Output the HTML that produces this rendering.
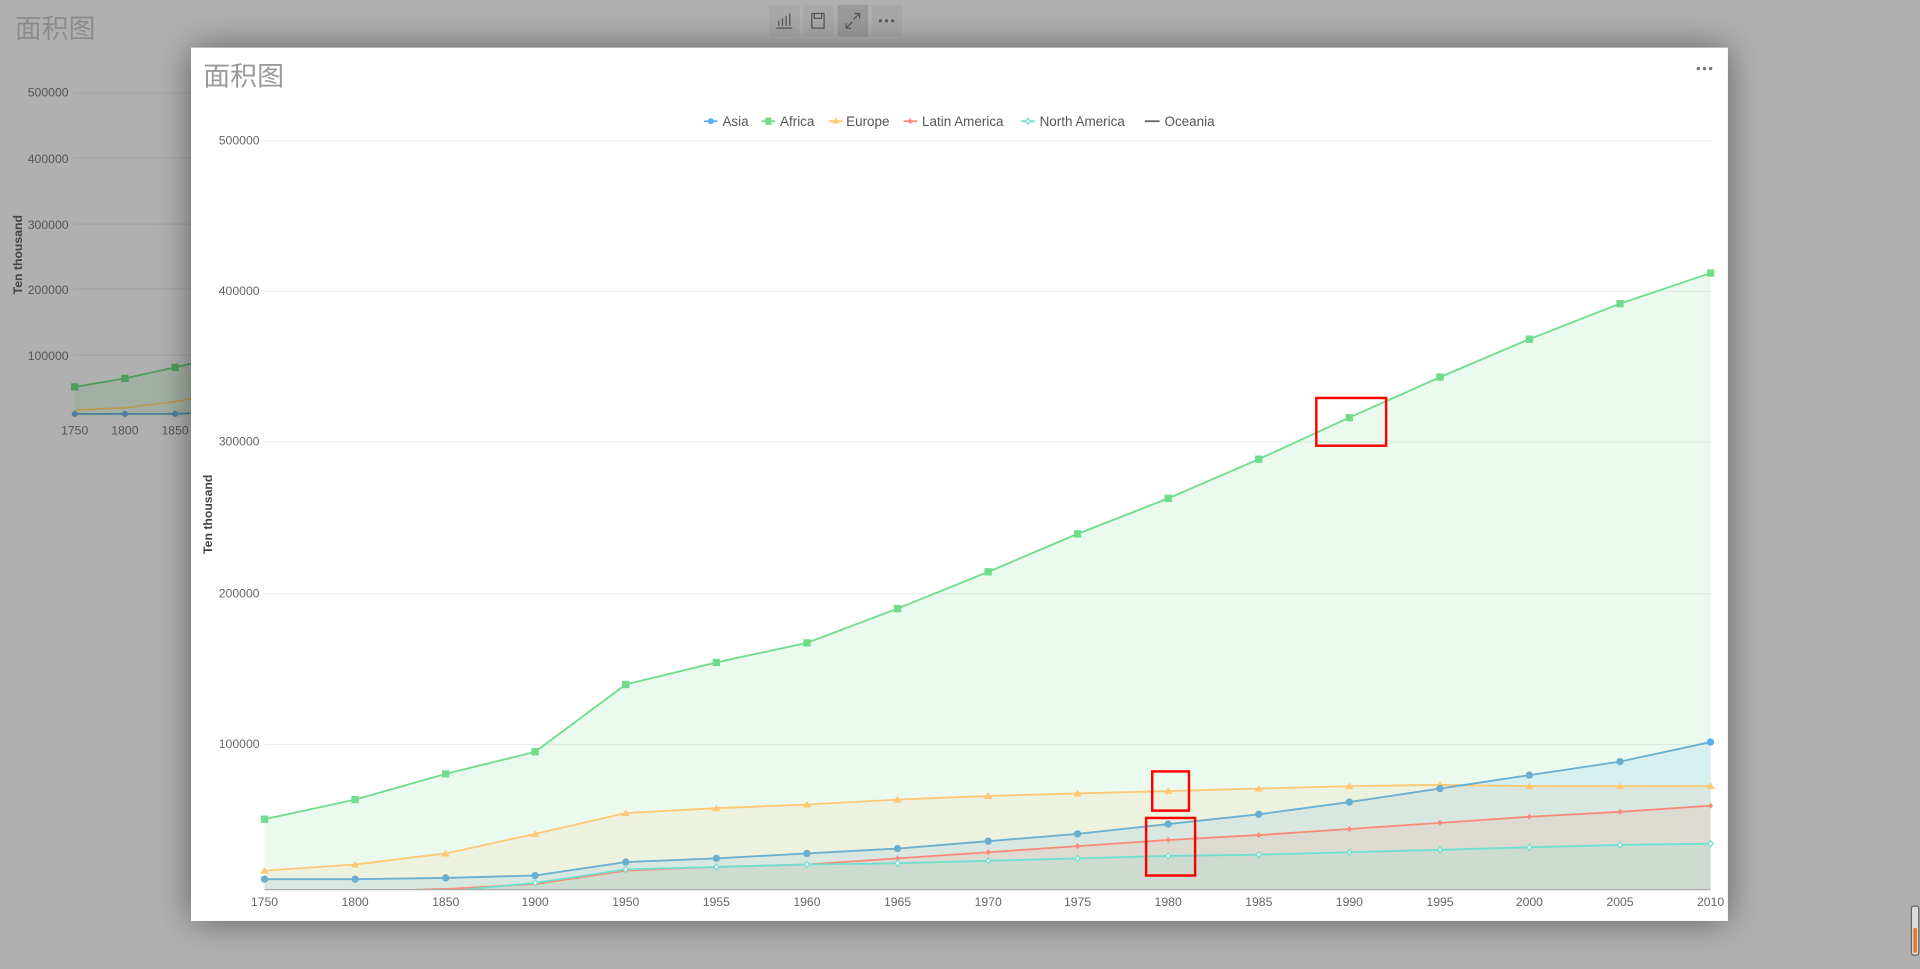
<!DOCTYPE html>
<html><head><meta charset="utf-8"><style>
html,body{margin:0;padding:0;width:1920px;height:969px;overflow:hidden;background:#b0b0b0}
svg{display:block}
text{font-family:"Liberation Sans","Noto Sans CJK SC",sans-serif}
</style></head><body>
<svg width="1920" height="969" viewBox="0 0 1568 791.35" xmlns="http://www.w3.org/2000/svg">
<defs>
<filter id="sh" x="-10%" y="-10%" width="120%" height="120%"><feDropShadow dx="0" dy="0" stdDeviation="14" flood-color="#000" flood-opacity="0.45"/></filter>
<clipPath id="pc"><rect x="216" y="100" width="1185" height="626"/></clipPath>
</defs>
<rect width="1568" height="792" fill="#b0b0b0"/>
<text x="12" y="31" font-size="22" fill="#8c8c8c">面积图</text>
<g font-size="10" fill="#555" text-anchor="end">
<text x="56" y="79">500000</text><text x="56" y="133">400000</text><text x="56" y="187">300000</text><text x="56" y="240">200000</text><text x="56" y="294">100000</text>
</g>
<g stroke="#a4a4a4" stroke-width="1"><line x1="60" y1="76" x2="170" y2="76"/><line x1="60" y1="129" x2="170" y2="129"/><line x1="60" y1="183" x2="170" y2="183"/><line x1="60" y1="236" x2="170" y2="236"/><line x1="60" y1="290" x2="170" y2="290"/></g>
<text transform="translate(18,208) rotate(-90)" font-size="10" font-weight="bold" fill="#444" text-anchor="middle">Ten thousand</text>
<g font-size="10" fill="#555" text-anchor="middle"><text x="61" y="355">1750</text><text x="102" y="355">1800</text><text x="143" y="355">1850</text></g>
<polygon points="61,316 102,309 143,300 165,295 165,340 61,340" fill="#8fae8f" opacity="0.4"/>
<polyline points="61,316 102,309 143,300 165,295" fill="none" stroke="#4e9e5e" stroke-width="1.5"/>
<polyline points="61,335 102,333 143,328 165,324" fill="none" stroke="#b99a52" stroke-width="1.5"/>
<polyline points="61,338 102,338 143,338 165,337" fill="none" stroke="#4d7d9b" stroke-width="1.5"/>
<g fill="#4e9e5e"><rect x="58" y="313" width="6" height="6"/><rect x="99" y="306" width="6" height="6"/><rect x="140" y="297" width="6" height="6"/></g>
<g fill="#4d7d9b"><circle cx="61" cy="338" r="2.5"/><circle cx="102" cy="338" r="2.5"/><circle cx="143" cy="338" r="2.5"/></g>
<g>
<rect x="628" y="4" width="25" height="26" fill="#a8a8a8"/><rect x="656" y="4" width="25" height="26" fill="#a8a8a8"/><rect x="684" y="4" width="25" height="26" fill="#9a9a9a"/><rect x="712" y="4" width="25" height="26" fill="#a8a8a8"/>
<g stroke="#555" stroke-width="1" fill="none">
<path d="M634 23h13M636 21v-4M639 21v-6M642 21v-8M645 21v-10"/>
<path d="M663 11h10v12h-10zM665 11v4h6v-4"/>
<path d="M691 23l5-5M691 23v-4M691 23h4M702 11l-5 5M702 11v4M702 11h-4"/>
</g>
<g fill="#555"><circle cx="719" cy="17" r="1.3"/><circle cx="724" cy="17" r="1.3"/><circle cx="729" cy="17" r="1.3"/></g>
</g>
<rect x="156" y="39" width="1255" height="713" fill="#fff" filter="url(#sh)"/>
<rect x="156" y="39" width="1255" height="713" fill="#fff"/>
<text x="166" y="70" font-size="22" fill="#9a9a9a">面积图</text>
<g fill="#777"><circle cx="1387" cy="56" r="1.4"/><circle cx="1392" cy="56" r="1.4"/><circle cx="1397" cy="56" r="1.4"/></g>
<g font-size="11" fill="#555">
<line x1="575" y1="99" x2="586" y2="99" stroke="#5ab1ef" stroke-width="1.5"/><circle cx="580.5" cy="99" r="2.5" fill="#5ab1ef"/><text x="590" y="103">Asia</text>
<line x1="622" y1="99" x2="633" y2="99" stroke="#6fdd8b" stroke-width="1.5"/><rect x="625" y="96" width="5" height="6" fill="#6fdd8b"/><text x="637" y="103">Africa</text>
<line x1="677" y1="99" x2="688" y2="99" stroke="#ffc875" stroke-width="1.5"/><path d="M682.5 96l3 5h-6z" fill="#ffc875"/><text x="691" y="103">Europe</text>
<line x1="738" y1="99" x2="749" y2="99" stroke="#f88a79" stroke-width="1.5"/><path d="M743.5 96.5l2 2.5-2 2.5-2-2.5z" fill="#f88a79"/><text x="753" y="103">Latin America</text>
<line x1="834" y1="99" x2="845" y2="99" stroke="#6ee0d0" stroke-width="1.5"/><path d="M839.5 96.5l2 2.5-2 2.5-2-2.5z" fill="#fff" stroke="#6ee0d0"/><text x="849" y="103">North America</text>
<line x1="935" y1="99" x2="947" y2="99" stroke="#666" stroke-width="1.5"/><text x="951" y="103">Oceania</text>
</g>
<g stroke="#eee" stroke-width="1"><line x1="216" y1="115" x2="1397" y2="115"/><line x1="216" y1="238" x2="1397" y2="238"/><line x1="216" y1="361" x2="1397" y2="361"/><line x1="216" y1="485" x2="1397" y2="485"/><line x1="216" y1="608" x2="1397" y2="608"/></g>
<g font-size="10" fill="#666" text-anchor="end">
<text x="212" y="118">500000</text><text x="212" y="241">400000</text><text x="212" y="364">300000</text><text x="212" y="488">200000</text><text x="212" y="611">100000</text>
</g>
<text transform="translate(173,420) rotate(-90)" font-size="10" font-weight="bold" fill="#444" text-anchor="middle">Ten thousand</text>
<g clip-path="url(#pc)">
<polygon fill="#6fdd8b" fill-opacity="0.14" points="216,726 216,669 290,653 364,632 437,614 511,559 585,541 659,525 733,497 807,467 880,436 954,407 1028,375 1102,341 1176,308 1249,277 1323,248 1397,223 1397,726"/>
<polygon fill="#ffc875" fill-opacity="0.14" points="216,726 216,711 290,706 364,697 437,681 511,664 585,660 659,657 733,653 807,650 880,648 954,646 1028,644 1102,642 1176,641 1249,642 1323,642 1397,642 1397,726"/>
<polygon fill="#5ab1ef" fill-opacity="0.14" points="216,726 216,718 290,718 364,717 437,715 511,704 585,701 659,697 733,693 807,687 880,681 954,673 1028,665 1102,655 1176,644 1249,633 1323,622 1397,606 1397,726"/>
<polygon fill="#f88a79" fill-opacity="0.14" points="216,730 290,728 364,726 437,722 511,711 585,708 659,706 733,701 807,696 880,691 954,686 1028,682 1102,677 1176,672 1249,667 1323,663 1397,658 1397,726 216,726"/>
<polygon fill="#6ee0d0" fill-opacity="0.14" points="216,732 290,730 364,728 437,721 511,710 585,708 659,706 733,705 807,703 880,701 954,699 1028,698 1102,696 1176,694 1249,692 1323,690 1397,689 1397,726 216,726"/>
<g fill="none" stroke-width="1.5">
<polyline stroke="#6fdd8b" points="216,669 290,653 364,632 437,614 511,559 585,541 659,525 733,497 807,467 880,436 954,407 1028,375 1102,341 1176,308 1249,277 1323,248 1397,223"/>
<polyline stroke="#ffc875" points="216,711 290,706 364,697 437,681 511,664 585,660 659,657 733,653 807,650 880,648 954,646 1028,644 1102,642 1176,641 1249,642 1323,642 1397,642"/>
<polyline stroke="#f88a79" points="216,730 290,728 364,726 437,722 511,711 585,708 659,706 733,701 807,696 880,691 954,686 1028,682 1102,677 1176,672 1249,667 1323,663 1397,658"/>
<polyline stroke="#6ee0d0" points="216,732 290,730 364,728 437,721 511,710 585,708 659,706 733,705 807,703 880,701 954,699 1028,698 1102,696 1176,694 1249,692 1323,690 1397,689"/>
<polyline stroke="#6aafd0" points="216,718 290,718 364,717 437,715 511,704 585,701 659,697 733,693 807,687 880,681 954,673 1028,665 1102,655 1176,644 1249,633 1323,622 1397,606"/>
</g>
</g>
<line x1="216" y1="726.5" x2="1397" y2="726.5" stroke="#aaa" stroke-width="1"/>
<g fill="#6fdd8b">
<rect x="213" y="666" width="6" height="6"/><rect x="287" y="650" width="6" height="6"/><rect x="361" y="629" width="6" height="6"/><rect x="434" y="611" width="6" height="6"/><rect x="508" y="556" width="6" height="6"/><rect x="582" y="538" width="6" height="6"/><rect x="656" y="522" width="6" height="6"/><rect x="730" y="494" width="6" height="6"/><rect x="804" y="464" width="6" height="6"/><rect x="877" y="433" width="6" height="6"/><rect x="951" y="404" width="6" height="6"/><rect x="1025" y="372" width="6" height="6"/><rect x="1099" y="338" width="6" height="6"/><rect x="1173" y="305" width="6" height="6"/><rect x="1246" y="274" width="6" height="6"/><rect x="1320" y="245" width="6" height="6"/><rect x="1394" y="220" width="6" height="6"/>
</g>
<g fill="#ffc875">
<path d="M216 708l3.5 5.5h-7z"/><path d="M290 703l3.5 5.5h-7z"/><path d="M364 694l3.5 5.5h-7z"/><path d="M437 678l3.5 5.5h-7z"/><path d="M511 661l3.5 5.5h-7z"/><path d="M585 657l3.5 5.5h-7z"/><path d="M659 654l3.5 5.5h-7z"/><path d="M733 650l3.5 5.5h-7z"/><path d="M807 647l3.5 5.5h-7z"/><path d="M880 645l3.5 5.5h-7z"/><path d="M954 643l3.5 5.5h-7z"/><path d="M1028 641l3.5 5.5h-7z"/><path d="M1102 639l3.5 5.5h-7z"/><path d="M1176 638l3.5 5.5h-7z"/><path d="M1249 639l3.5 5.5h-7z"/><path d="M1323 639l3.5 5.5h-7z"/><path d="M1397 639l3.5 5.5h-7z"/>
</g>
<g fill="#f88a79">
<path d="M511 708.5l2 2.5-2 2.5-2-2.5z"/><path d="M585 705.5l2 2.5-2 2.5-2-2.5z"/><path d="M659 703.5l2 2.5-2 2.5-2-2.5z"/><path d="M733 698.5l2 2.5-2 2.5-2-2.5z"/><path d="M807 693.5l2 2.5-2 2.5-2-2.5z"/><path d="M880 688.5l2 2.5-2 2.5-2-2.5z"/><path d="M954 683.5l2 2.5-2 2.5-2-2.5z"/><path d="M1028 679.5l2 2.5-2 2.5-2-2.5z"/><path d="M1102 674.5l2 2.5-2 2.5-2-2.5z"/><path d="M1176 669.5l2 2.5-2 2.5-2-2.5z"/><path d="M1249 664.5l2 2.5-2 2.5-2-2.5z"/><path d="M1323 660.5l2 2.5-2 2.5-2-2.5z"/><path d="M1397 655.5l2 2.5-2 2.5-2-2.5z"/>
</g>
<g fill="#fff" stroke="#6ee0d0" stroke-width="1">
<path d="M437 718.5l2 2.5-2 2.5-2-2.5z"/><path d="M511 707.5l2 2.5-2 2.5-2-2.5z"/><path d="M585 705.5l2 2.5-2 2.5-2-2.5z"/><path d="M659 703.5l2 2.5-2 2.5-2-2.5z"/><path d="M733 702.5l2 2.5-2 2.5-2-2.5z"/><path d="M807 700.5l2 2.5-2 2.5-2-2.5z"/><path d="M880 698.5l2 2.5-2 2.5-2-2.5z"/><path d="M954 696.5l2 2.5-2 2.5-2-2.5z"/><path d="M1028 695.5l2 2.5-2 2.5-2-2.5z"/><path d="M1102 693.5l2 2.5-2 2.5-2-2.5z"/><path d="M1176 691.5l2 2.5-2 2.5-2-2.5z"/><path d="M1249 689.5l2 2.5-2 2.5-2-2.5z"/><path d="M1323 687.5l2 2.5-2 2.5-2-2.5z"/><path d="M1397 686.5l2 2.5-2 2.5-2-2.5z"/>
</g>
<g fill="#6aafd0">
<circle cx="216" cy="718" r="3"/><circle cx="290" cy="718" r="3"/><circle cx="364" cy="717" r="3"/><circle cx="437" cy="715" r="3"/><circle cx="511" cy="704" r="3"/><circle cx="585" cy="701" r="3"/><circle cx="659" cy="697" r="3"/><circle cx="733" cy="693" r="3"/><circle cx="807" cy="687" r="3"/><circle cx="880" cy="681" r="3"/><circle cx="954" cy="673" r="3"/><circle cx="1028" cy="665" r="3"/><circle cx="1102" cy="655" r="3"/><circle cx="1176" cy="644" r="3"/><circle cx="1249" cy="633" r="3"/><circle cx="1323" cy="622" r="3"/><circle cx="1397" cy="606" r="3" fill="#5ab1ef"/>
</g>
<g font-size="10" fill="#666" text-anchor="middle">
<text x="216" y="740">1750</text><text x="290" y="740">1800</text><text x="364" y="740">1850</text><text x="437" y="740">1900</text><text x="511" y="740">1950</text><text x="585" y="740">1955</text><text x="659" y="740">1960</text><text x="733" y="740">1965</text><text x="807" y="740">1970</text><text x="880" y="740">1975</text><text x="954" y="740">1980</text><text x="1028" y="740">1985</text><text x="1102" y="740">1990</text><text x="1176" y="740">1995</text><text x="1249" y="740">2000</text><text x="1323" y="740">2005</text><text x="1397" y="740">2010</text>
</g>
<g fill="none" stroke="#f00" stroke-width="2">
<rect x="1075" y="325" width="57" height="39"/><rect x="941" y="630" width="30" height="32"/><rect x="936" y="668" width="40" height="47"/>
</g>
<rect x="1561" y="740" width="6" height="40" rx="2" fill="#ddd" stroke="#666" stroke-width="1"/>
<rect x="1562.5" y="758" width="3" height="20" fill="#e57a2b"/>
</svg>
</body></html>
